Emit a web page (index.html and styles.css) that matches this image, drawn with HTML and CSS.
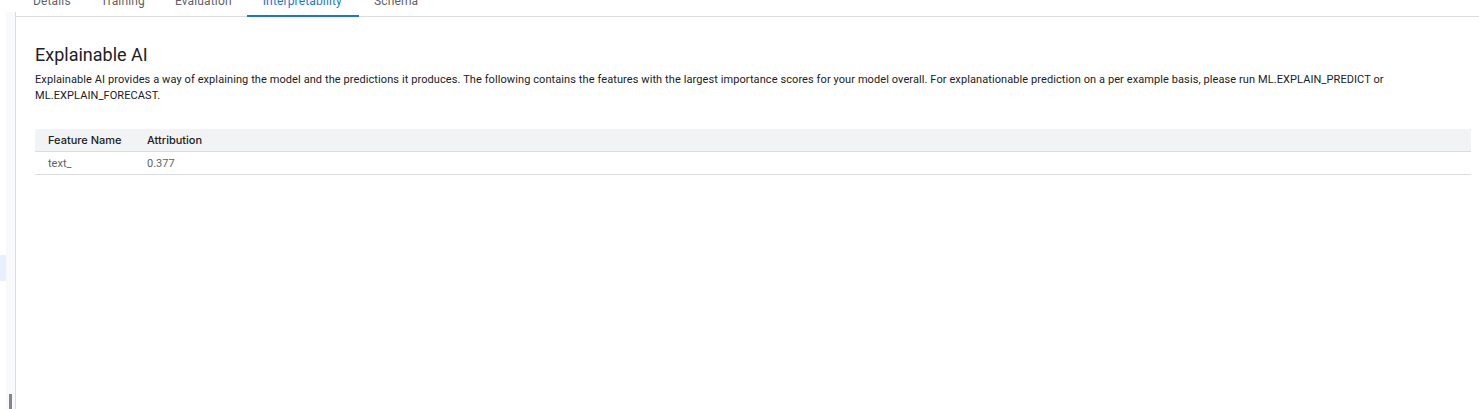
FILE: index.html
```html
<!DOCTYPE html>
<html>
<head>
<meta charset="utf-8">
<link rel="stylesheet" href="styles.css">
</head>
<body>
<div class="app">
  <aside class="rail">
    <div class="rail-edge">
      <div class="rail-active"></div>
    </div>
    <div class="rail-strip">
      <div class="rail-scroll"></div>
    </div>
  </aside>
  <main class="main">
    <nav class="tabs">
      <div class="tab">Details</div>
      <div class="tab">Training</div>
      <div class="tab">Evaluation</div>
      <div class="tab active">Interpretability</div>
      <div class="tab">Schema</div>
    </nav>
    <section class="content">
      <h1 class="title">Explainable AI</h1>
      <p class="desc">Explainable AI provides a way of explaining the model and the predictions it produces. The following contains the features with the largest importance scores for your model overall. For explanationable prediction on a per example basis, please run ML.EXPLAIN_PREDICT or ML.EXPLAIN_FORECAST.</p>
      <table class="table">
        <thead>
          <tr><th class="c1">Feature Name</th><th>Attribution</th></tr>
        </thead>
        <tbody>
          <tr><td class="c1">text_</td><td>0.377</td></tr>
        </tbody>
      </table>
    </section>
  </main>
</div>
</body>
</html>
```
FILE: styles.css
```css
html, body {
  margin: 0;
  padding: 0;
  background: #ffffff;
  height: 100%;
  overflow: hidden;
}
body {
  font-family: Roboto, "Liberation Sans", sans-serif;
  color: #202124;
}
.app {
  display: flex;
  height: 409px;
}
.rail {
  display: flex;
  flex: 0 0 auto;
}
.rail-edge {
  width: 6px;
  padding-top: 255px;
  box-sizing: border-box;
}
.rail-active {
  height: 26px;
  background: #e8f0fe;
}
.rail-strip {
  width: 9px;
  margin-top: 12px;
  background: #f8f9fa;
  border-right: 1px solid #dadce0;
  display: flex;
  flex-direction: column;
  justify-content: flex-end;
  align-items: center;
}
.rail-scroll {
  width: 3px;
  height: 15px;
  background: #80868b;
  margin-right: 1px;
}
.main {
  flex: 1;
  min-width: 0;
  padding-right: 8px;
}
.tabs {
  display: flex;
  margin-top: -31px;
  height: 48px;
  box-sizing: border-box;
  border-bottom: 1px solid #dadce0;
  margin-right: -8px;
  padding-left: 2px;
}
.tab {
  padding: 0 15px 6px 15px;
  display: flex;
  align-items: flex-end;
  font-size: 12px;
  line-height: 16px;
  letter-spacing: 0.15px;
  color: #5f6368;
  border-bottom: 2px solid transparent;
  margin-bottom: -1px;
}
.tab.active {
  color: #1a73e8;
  border-bottom-color: #1a73e8;
  padding-left: 16px;
  padding-right: 17px;
}
.content {
  padding: 0 0 0 19px;
}
.title {
  margin: 26px 0 0 0;
  font-size: 18px;
  font-weight: 400;
  line-height: 24px;
  color: #202124;
}
.desc {
  margin: 5px 0 0 0;
  font-size: 11px;
  line-height: 16px;
  letter-spacing: 0.09px;
  color: #202124;
}
.table {
  margin-top: 25px;
  width: 100%;
  border-collapse: collapse;
  font-size: 11px;
}
.table th {
  background: #f1f3f4;
  text-align: left;
  font-family: Inter, Roboto, sans-serif;
  font-weight: 500;
  height: 22px;
  padding: 0;
  border-bottom: 1px solid #dadce0;
  color: #202124;
}
.table td {
  height: 22px;
  padding: 0;
  color: #5f6368;
  border-bottom: 1px solid #dadce0;
}
.table .c1 {
  width: 99px;
  padding-left: 13px;
}
```
